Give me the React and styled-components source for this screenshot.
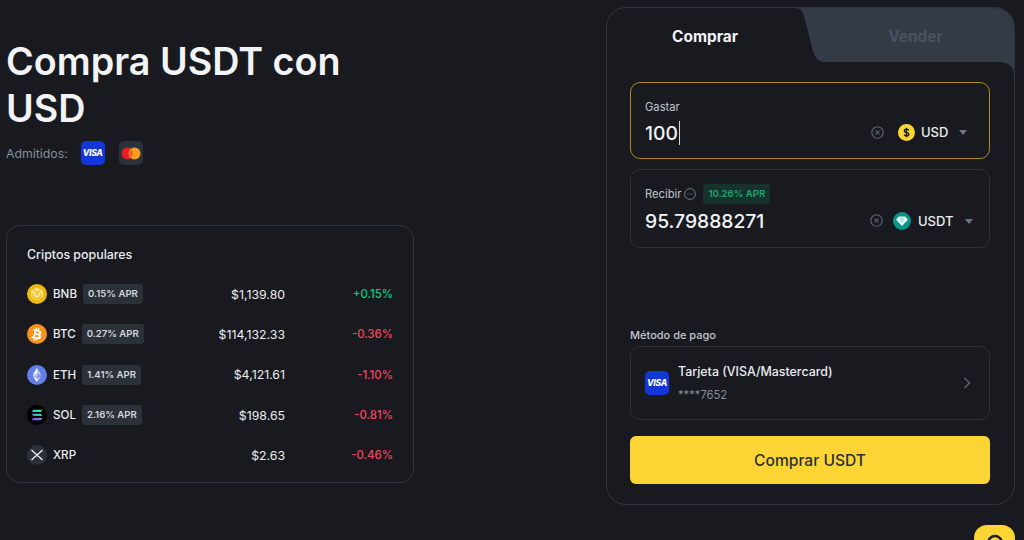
import React from "react"
import styled, { createGlobalStyle } from "styled-components"

const GlobalStyle = createGlobalStyle`
  html, body {
    margin: 0;
    height: 540px;
    overflow: hidden;
    background: #181a20;
    font-family: Inter, "Liberation Sans", sans-serif;
    color: #eaecef;
  }
  * { box-sizing: border-box; }
`

const Page = styled.div`
  display: flex;
  justify-content: space-between;
  align-items: flex-start;
  height: 540px;
  padding: 7px 9px 0 6px;
`

const LeftColumn = styled.div`
  width: 408px;
  padding-top: 31px;
`

const Title = styled.h1`
  margin: 0;
  font-size: 37.7px;
  line-height: 47px;
  font-weight: 600;
  color: #f2f3f5;
`

const Supported = styled.div`
  display: flex;
  align-items: center;
  height: 24px;
  margin-top: 9px;
  font-size: 12.3px;
  color: #848e9c;
`

const SupportedIcons = styled.div`
  display: flex;
  gap: 14px;
  margin-left: 13px;
`

const VisaBadge = styled.div`
  display: flex;
  align-items: center;
  justify-content: center;
  width: 24px;
  height: 24px;
  border-radius: 5px;
  background: #1336d6;
  color: #fff;
  font-size: 8.6px;
  font-weight: 800;
  font-style: italic;
  letter-spacing: -0.3px;
`

const MasterBadge = styled.div`
  display: flex;
  align-items: center;
  justify-content: center;
  width: 24px;
  height: 24px;
  border-radius: 5px;
  background: #2b3139;
`

const PopularCard = styled.section`
  margin-top: 60px;
  height: 258px;
  padding: 21px 20px 0;
  border: 1px solid #2f353f;
  border-radius: 14px;
`

const CardTitle = styled.div`
  font-size: 12.4px;
  line-height: 16px;
  font-weight: 500;
`

const CoinList = styled.div`
  display: grid;
  grid-template-rows: repeat(5, 40.3px);
  margin-top: 11px;
`

const CoinRow = styled.div`
  display: grid;
  grid-template-columns: 1fr auto 108px;
  align-items: center;
  font-size: 12px;
`

const CoinName = styled.div`
  display: flex;
  align-items: center;
  font-size: 11.6px;
  font-weight: 500;
`

const CoinIcon = styled.span`
  display: flex;
  align-items: center;
  justify-content: center;
  width: 20px;
  height: 20px;
  margin-right: 6px;
  flex: none;
`

const Badge = styled.span`
  display: inline-block;
  margin-left: 6px;
  padding: 0 5px;
  height: 20px;
  line-height: 20px;
  border-radius: 3px;
  background: ${p => (p.$green ? "#16322c" : "#2b3139")};
  color: ${p => (p.$green ? "#1fa66f" : "#d3d7dc")};
  font-size: 9.6px;
  font-weight: 600;
  white-space: nowrap;
`

const Price = styled.div`
  text-align: right;
  font-size: 12.3px;
`

const Change = styled.div`
  text-align: right;
  font-size: 11.4px;
  font-weight: 500;
  color: ${p => (p.$up ? "#0ecb81" : "#f6465d")};
`

const Panel = styled.section`
  position: relative;
  width: 409px;
  height: 498px;
  border: 1px solid #2f353f;
  border-radius: 20px;
  overflow: hidden;
`

const TabShape = styled.svg`
  position: absolute;
  top: 0;
  right: 0;
`

const Tabs = styled.div`
  position: relative;
  display: grid;
  grid-template-columns: 196px 1fr;
  height: 54px;
  align-items: center;
  margin-bottom: 20px;
`

const Tab = styled.div`
  text-align: center;
  font-size: 15.4px;
  font-weight: 700;
  color: ${p => (p.$active ? "#f2f3f5" : "#4a5260")};
  padding-left: ${p => (p.$active ? "0" : "14px")};
  transform: translateY(1px);
`

const PanelBody = styled.div`
  display: flex;
  flex-direction: column;
  padding: 0 24px 0 23px;
`

const Field = styled.div`
  display: flex;
  flex-direction: column;
  height: ${p => (p.$focus ? "77px" : "79px")};
  margin-bottom: 10px;
  padding: 14px 13px 0 14px;
  border: 1px solid ${p => (p.$focus ? "#b28a17" : "#2b3139")};
  border-radius: 10px;
`

const FieldLabel = styled.div`
  display: flex;
  align-items: center;
  height: 20px;
  font-size: 11.2px;
  color: #c1c6cd;
`

const FieldRow = styled.div`
  display: flex;
  align-items: center;
  height: 30px;
  margin-top: ${p => (p.$focus ? "1px" : "2px")};
`

const Amount = styled.div`
  flex: 1;
  display: flex;
  align-items: center;
  font-size: 19.3px;
  font-weight: 500;
  color: #f2f3f5;
`

const Caret = styled.span`
  width: 1px;
  height: 24px;
  margin-left: 1px;
  background: #d5d8dc;
`

const Currency = styled.div`
  display: flex;
  align-items: center;
  width: ${p => p.$width}px;
  flex: none;
  margin-bottom: ${p => (p.$lift ? "2px" : "0")};
  font-size: 13px;
  font-weight: 500;
`

const ClearIcon = styled.svg`
  margin-right: ${p => p.$gap}px;
  margin-bottom: 2px;
  flex: none;
`

const CurrencyCode = styled.span`
  margin-left: ${p => p.$gap}px;
`

const Arrow = styled.span`
  width: 0;
  height: 0;
  margin-left: 11px;
  border-left: 4.5px solid transparent;
  border-right: 4.5px solid transparent;
  border-top: 5px solid #6d7583;
`

const InfoIcon = styled.svg`
  margin-left: 3px;
  margin-right: 1px;
`

const SectionLabel = styled.div`
  margin-top: 70px;
  font-size: 11px;
  line-height: 14px;
  font-weight: 500;
  color: #c1c6cd;
`

const PayCard = styled.div`
  display: flex;
  align-items: center;
  height: 74px;
  margin-top: 4px;
  padding: 0 18px 0 14px;
  border: 1px solid #2b3139;
  border-radius: 10px;
`

const PayVisa = styled(VisaBadge)`
  margin-right: 9px;
`

const PayText = styled.div`
  flex: 1;
`

const PayName = styled.div`
  font-size: 12.4px;
  line-height: 16px;
  font-weight: 500;
`

const PayNumber = styled.div`
  margin-top: 8px;
  font-size: 11.2px;
  line-height: 14px;
  color: #848e9c;
`

const BuyButton = styled.button`
  height: 48px;
  margin-top: 16px;
  padding: 1px 0 0;
  border: 0;
  border-radius: 6px;
  background: #fcd535;
  color: #2b2f36;
  font-family: inherit;
  font-size: 15.6px;
  font-weight: 500;
`

const HelpButton = styled.div`
  position: fixed;
  left: 974px;
  top: 525px;
  width: 41px;
  height: 41px;
  display: flex;
  justify-content: center;
  padding-top: 8px;
  border-radius: 13px;
  background: #fcd535;
`

const coins = [
  { symbol: "BNB", apr: "0.15% APR", price: "$1,139.80", change: "+0.15%", up: true },
  { symbol: "BTC", apr: "0.27% APR", price: "$114,132.33", change: "-0.36%" },
  { symbol: "ETH", apr: "1.41% APR", price: "$4,121.61", change: "-1.10%" },
  { symbol: "SOL", apr: "2.16% APR", price: "$198.65", change: "-0.81%" },
  { symbol: "XRP", price: "$2.63", change: "-0.46%" },
]

const BnbIcon = () => (
  <svg width="20" height="20" viewBox="0 0 20 20">
    <circle cx="10" cy="10" r="10" fill="#f0b90b" />
    <path d="M10 3.400l5.800 3.300v6.600L10 16.600l-5.800-3.300V6.700z" fill="#fbe48f" />
    <path d="M6.800 6.800L10 8.600l3.200-1.800M10 8.600v2.800M6 9.600v3l4 2.200 4-2.200v-3" fill="none" stroke="#f0b90b" strokeWidth="1.200" />
  </svg>
)

const BtcIcon = () => (
  <svg width="20" height="20" viewBox="0 0 20 20">
    <circle cx="10" cy="10" r="10" fill="#f7931a" />
    <path
      d="M14.300 8.800c.2-1.400-.8-2.100-2.300-2.600l.5-1.900-1.200-.3-.5 1.800-.9-.2.500-1.800-1.200-.3-.5 1.900-2.300-.6-.3 1.300s.9.200.8.200c.5.100.6.400.6.700l-1.300 5.200c-.1.200-.2.400-.6.300 0 0-.8-.2-.8-.2l-.6 1.400 2.300.6-.5 1.900 1.200.3.500-1.900.9.200-.5 1.900 1.200.3.500-1.900c2 .4 3.500.2 4.200-1.600.5-1.500 0-2.300-1.100-2.800.8-.2 1.400-.7 1.500-1.800zm-2.700 3.700c-.4 1.500-2.800.7-3.600.5l.7-2.600c.8.200 3.300.6 2.900 2.100zm.4-3.700c-.3 1.300-2.300.6-3 .5l.6-2.300c.6.200 2.700.4 2.400 1.800z"
      fill="#fff"
    />
  </svg>
)

const EthIcon = () => (
  <svg width="20" height="20" viewBox="0 0 20 20">
    <circle cx="10" cy="10" r="10" fill="#627eea" />
    <path d="M10 2.800v5.400l4.400 2z" fill="#fff" fillOpacity=".6" />
    <path d="M10 2.800L5.600 10.200 10 8.200z" fill="#fff" />
    <path d="M10 13.600v3.600l4.400-6.100z" fill="#fff" fillOpacity=".6" />
    <path d="M10 13.600v3.600l-4.400-6.100z" fill="#fff" />
    <path d="M10 12.800l4.400-2.600L10 8.200z" fill="#fff" fillOpacity=".25" />
    <path d="M5.600 10.200l4.400 2.600V8.200z" fill="#fff" fillOpacity=".6" />
  </svg>
)

const SolIcon = () => (
  <svg width="20" height="20" viewBox="0 0 20 20">
    <defs>
      <linearGradient id="sol" x1="0.100" y1="1" x2="0.900" y2="0">
        <stop offset="0.150" stopColor="#a845ff" />
        <stop offset="0.500" stopColor="#43b4ca" />
        <stop offset="0.900" stopColor="#19fb9b" />
      </linearGradient>
    </defs>
    <circle cx="10" cy="10" r="10" fill="#000" />
    <path d="M6.400 4.700h9.100l-1.900 2.300H4.500zM4.500 8.800h9.100l1.900 2.300H6.400zM6.400 12.900h9.100l-1.900 2.300H4.500z" fill="url(#sol)" />
  </svg>
)

const XrpIcon = () => (
  <svg width="20" height="20" viewBox="0 0 20 20">
    <circle cx="10" cy="10" r="10" fill="#2b3139" />
    <path d="M4.500 5l4 3.800c.8.800 2.200.8 3 0l4-3.800M4.500 15l4-3.800c.8-.8 2.200-.8 3 0l4 3.800" fill="none" stroke="#e6e8ea" strokeWidth="1.400" />
  </svg>
)

const coinIcons = { BNB: BnbIcon, BTC: BtcIcon, ETH: EthIcon, SOL: SolIcon, XRP: XrpIcon }

const Clear = ({ gap }) => (
  <ClearIcon $gap={gap} width="13" height="13" viewBox="0 0 13 13">
    <circle cx="6.500" cy="6.500" r="5.700" fill="none" stroke="#5e6673" strokeWidth="1.100" />
    <path d="M4.600 4.600l3.800 3.800M8.400 4.600l-3.800 3.800" stroke="#5e6673" strokeWidth="1.100" />
  </ClearIcon>
)

const UsdIcon = () => (
  <svg width="17" height="17" viewBox="0 0 17 17">
    <circle cx="8.500" cy="8.500" r="8.500" fill="#fcd535" />
    <path d="M10.700 6.300c-.4-.7-1.200-1-2.200-1-1.200 0-2.100.6-2.100 1.600 0 2.200 4.400 1 4.400 3.300 0 1-1 1.600-2.300 1.600-1.100 0-1.900-.4-2.300-1.200M8.500 3.800v9.400" fill="none" stroke="#1e2026" strokeWidth="1.400" />
  </svg>
)

const UsdtIcon = () => (
  <svg width="18" height="18" viewBox="0 0 18 18">
    <circle cx="9" cy="9" r="9" fill="#0d9488" />
    <path d="M5.700 4.600h6.600l2.600 3.100L9 14 3.100 7.700z" fill="#e4f8f4" />
    <path d="M6.500 7.600L9 11l2.500-3.400z" fill="#a9e6da" />
    <path d="M7 6.300h4" stroke="#7fd6c8" strokeWidth=".8" />
  </svg>
)

const App = () => (
  <Page>
    <GlobalStyle />
    <LeftColumn>
      <Title>Compra USDT con USD</Title>
      <Supported>
        Admitidos:
        <SupportedIcons>
          <VisaBadge>VISA</VisaBadge>
          <MasterBadge>
            <svg width="20" height="13" viewBox="0 0 20 13">
              <circle cx="6.500" cy="6.500" r="6" fill="#eb1c26" />
              <circle cx="13.500" cy="6.500" r="6" fill="#f79e1b" />
              <path d="M10 2.200a6 6 0 0 1 0 8.600 6 6 0 0 1 0-8.600z" fill="#f26122" />
            </svg>
          </MasterBadge>
        </SupportedIcons>
      </Supported>

      <PopularCard>
        <CardTitle>Criptos populares</CardTitle>
        <CoinList>
          {coins.map(coin => {
            const Icon = coinIcons[coin.symbol]
            return (
              <CoinRow key={coin.symbol}>
                <CoinName>
                  <CoinIcon>
                    <Icon />
                  </CoinIcon>
                  {coin.symbol}
                  {coin.apr ? <Badge>{coin.apr}</Badge> : null}
                </CoinName>
                <Price>{coin.price}</Price>
                <Change $up={coin.up}>{coin.change}</Change>
              </CoinRow>
            )
          })}
        </CoinList>
      </PopularCard>
    </LeftColumn>

    <Panel>
      <TabShape width="218" height="68" viewBox="0 0 218 68">
        <path
          d="M0 0H198Q218 0 218 20V68Q218 54 202 54H28Q20 54 17 43L8 8Q6 0 0 0Z"
          fill="#333b47"
        />
      </TabShape>
      <Tabs>
        <Tab $active>Comprar</Tab>
        <Tab>Vender</Tab>
      </Tabs>
      <PanelBody>
        <Field $focus>
          <FieldLabel>Gastar</FieldLabel>
          <FieldRow $focus>
            <Amount>
              100
              <Caret />
            </Amount>
            <Clear gap={14} />
            <Currency $width={78} $lift>
              <UsdIcon />
              <CurrencyCode $gap={6}>USD</CurrencyCode>
              <Arrow />
            </Currency>
          </FieldRow>
        </Field>
        <Field>
          <FieldLabel>
            Recibir
            <InfoIcon width="12" height="12" viewBox="0 0 12 12">
              <circle cx="6" cy="6" r="5.400" fill="none" stroke="#6d7583" strokeWidth="1" />
              <path d="M3.500 6h5" stroke="#6d7583" strokeWidth="1" strokeDasharray="1 1" />
            </InfoIcon>
            <Badge $green>10.26% APR</Badge>
          </FieldLabel>
          <FieldRow>
            <Amount>95.79888271</Amount>
            <Clear gap={10} />
            <Currency $width={83}>
              <UsdtIcon />
              <CurrencyCode $gap={7}>USDT</CurrencyCode>
              <Arrow />
            </Currency>
          </FieldRow>
        </Field>

        <SectionLabel>Método de pago</SectionLabel>
        <PayCard>
          <PayVisa>VISA</PayVisa>
          <PayText>
            <PayName>Tarjeta (VISA/Mastercard)</PayName>
            <PayNumber>****7652</PayNumber>
          </PayText>
          <svg width="8" height="12" viewBox="0 0 8 12">
            <path d="M1.500 1l5 5-5 5" fill="none" stroke="#5e6673" strokeWidth="1.400" />
          </svg>
        </PayCard>
        <BuyButton>Comprar USDT</BuyButton>
      </PanelBody>
    </Panel>
    <HelpButton>
      <svg width="20" height="10" viewBox="0 0 20 10">
        <path d="M3 10a7 7 0 0 1 14 0" fill="none" stroke="#1e2026" strokeWidth="2.500" />
      </svg>
    </HelpButton>
  </Page>
)

export default App
